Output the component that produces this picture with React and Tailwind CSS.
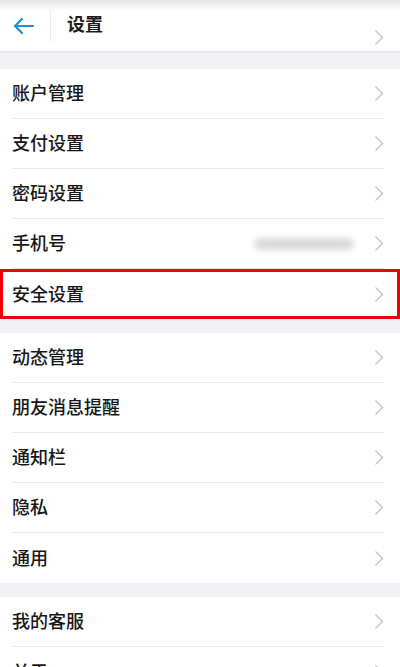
import React from "react";

const Chevron = () => (
  <svg width="10" height="17" viewBox="0 0 10 17" className="shrink-0">
    <polyline
      points="1.5,1.5 8.5,8.5 1.5,15.5"
      fill="none"
      stroke="#c4c4c4"
      strokeWidth="1.4"
    />
  </svg>
);

const Row = ({ label, extra, last, highlight }) => (
  <div
    className={`h-[50px] flex items-center bg-white ${
      highlight ? "border-[3px] border-[#f00000] pl-[9px] pr-[13px]" : "pl-3 pr-4"
    }`}
  >
    <div
      className={`flex-1 h-full flex items-center ${
        !last && !highlight ? "border-b border-[#e8e8e8]" : ""
      }`}
    >
      <span className="flex-1 text-[18px] font-medium text-[#161616] -mt-0.5">{label}</span>
      {extra && (
        <span className="mr-5 w-[100px] h-[12px] rounded-full bg-[#d8d8d8] blur-[3px]" />
      )}
      <Chevron />
    </div>
  </div>
);

const sections = [
  [
    { label: "账户管理" },
    { label: "支付设置" },
    { label: "密码设置" },
    { label: "手机号", extra: true },
    { label: "安全设置", highlight: true, last: true },
  ],
  [
    { label: "动态管理" },
    { label: "朋友消息提醒" },
    { label: "通知栏" },
    { label: "隐私" },
    { label: "通用", last: true },
  ],
  [{ label: "我的客服" }, { label: "关于", last: true }],
];

const App = () => {
  return (
    <div
      className="w-[400px] h-[667px] overflow-hidden bg-[#f2f2f5]"
      style={{ fontFamily: '"Noto Sans CJK SC", "Noto Sans", sans-serif' }}
    >
      <div className="h-[52px] flex items-center bg-[linear-gradient(to_bottom,#e4e4e4_0px,#ffffff_11px)] border-b border-[#e2e2e2] pl-3 pr-4">
        <svg width="22" height="18" viewBox="0 0 22 18">
          <path
            d="M21 9H3M10 2L3 9l7 7"
            fill="none"
            stroke="#1d8fe1"
            strokeWidth="2.2"
            strokeLinecap="round"
            strokeLinejoin="round"
          />
        </svg>
        <div className="ml-4 w-px h-8 bg-[#ececec]" />
        <span className="ml-4 -mt-1 text-[18px] font-bold text-[#1c1c1c]">设置</span>
        <div className="flex-1" />
        <div className="mt-6">
          <Chevron />
        </div>
      </div>

      {sections.map((rows, i) => (
        <div key={i} className={i === 0 ? "mt-[17px]" : "mt-[14px]"}>
          {rows.map((r) => (
            <Row key={r.label} {...r} />
          ))}
        </div>
      ))}
    </div>
  );
};

export default App;
